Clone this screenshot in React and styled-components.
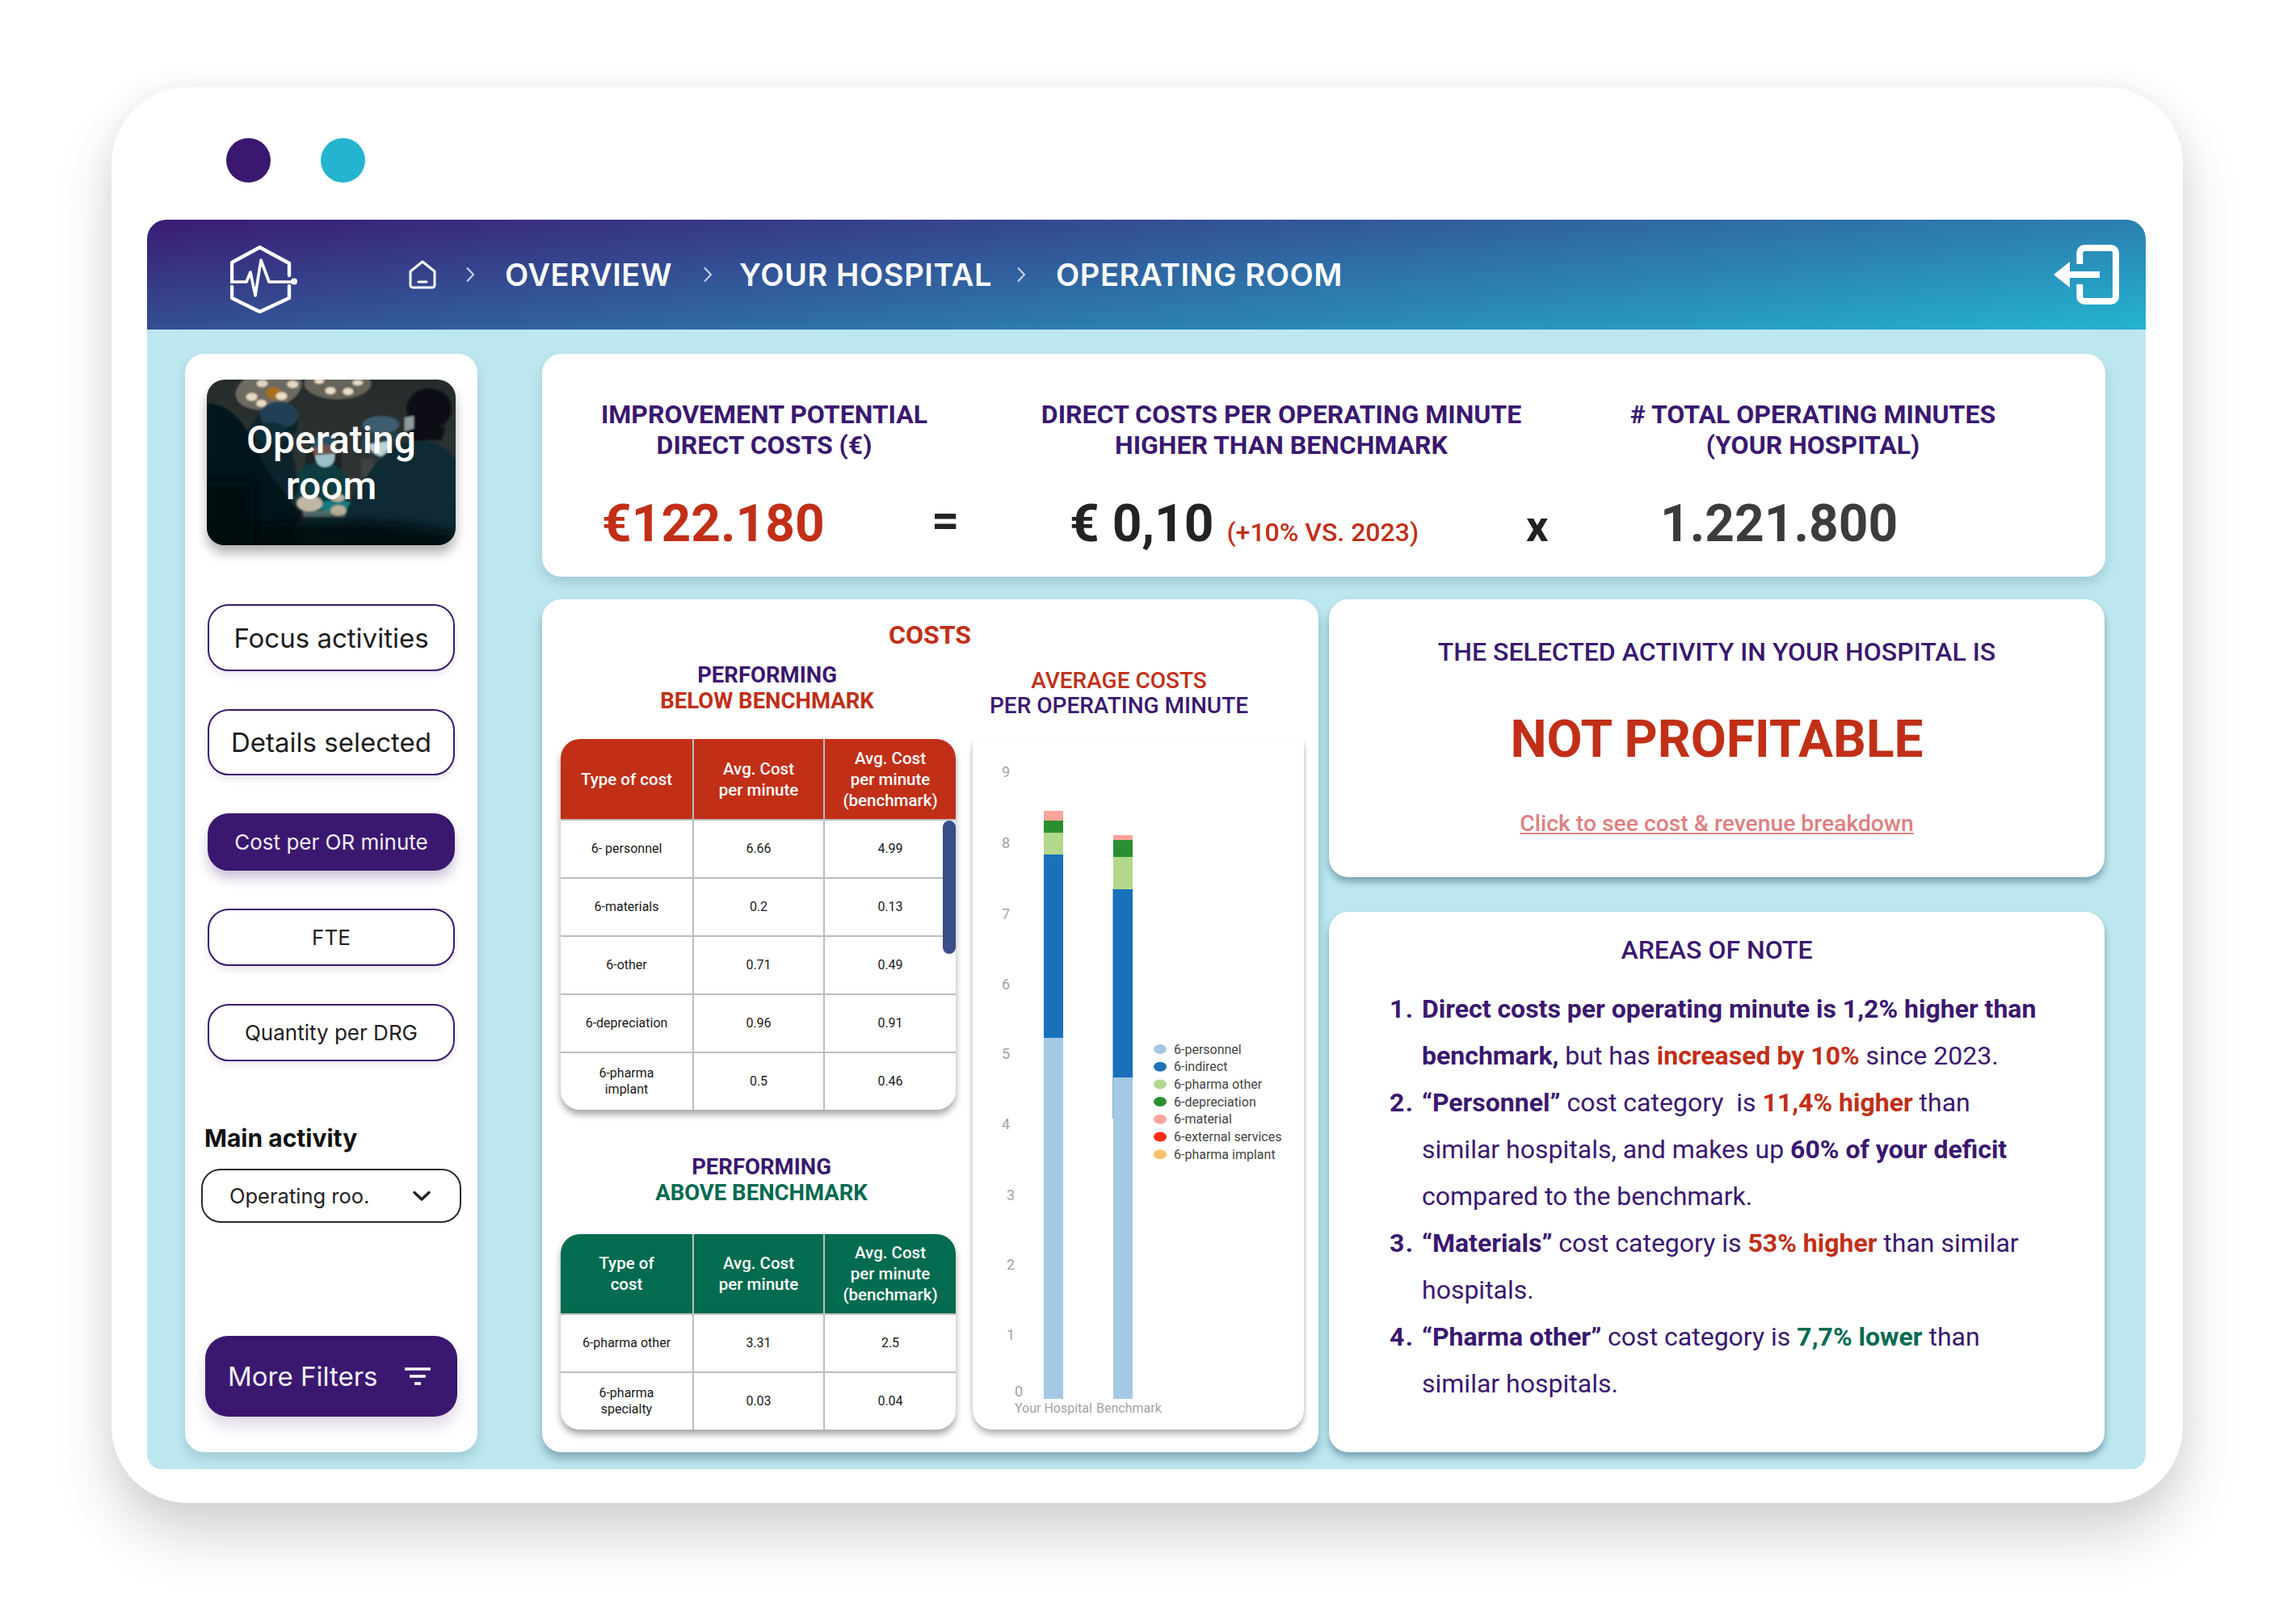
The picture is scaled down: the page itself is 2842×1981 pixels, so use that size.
import React from "react";
import styled, { createGlobalStyle } from "styled-components";

const PURPLE = "#3a186f";
const RED = "#c12f17";
const GREEN = "#036b4f";

const GlobalStyle = createGlobalStyle`
  html, body {
    margin: 0;
    padding: 0;
    background: #fff;
    font-family: "Roboto", "Liberation Sans", sans-serif;
  }
  * { box-sizing: border-box; }
`;

const Page = styled.div`
  width: 2842px;
  height: 1981px;
  padding: 108px 140px 0 138px;
  overflow: hidden;
`;

const Shell = styled.div`
  height: 1753px;
  background: #fff;
  border-radius: 95px;
  padding: 0 46px 42px 44px;
  display: flex;
  flex-direction: column;
  box-shadow: 0 40px 70px rgba(0, 0, 0, 0.17), 0 0 40px rgba(0, 0, 0, 0.05);
`;

const DotRow = styled.div`
  height: 164px;
  flex: none;
  display: flex;
  gap: 62px;
  align-items: flex-start;
  padding: 63px 0 0 98px;
`;

const Dot = styled.span`
  width: 55px;
  height: 55px;
  border-radius: 50%;
  background: ${(p) => p.$color};
`;

const Header = styled.header`
  height: 136px;
  flex: none;
  border-radius: 24px 24px 0 0;
  background: linear-gradient(174deg, #3b1b74 0%, #24b4d0 100%);
  display: flex;
  align-items: center;
  padding: 0 33px 0 103px;
  color: #fff;
`;

const LogoMark = styled.svg`
  flex: none;
  margin-top: 12px;
`;

const Crumbs = styled.nav`
  display: flex;
  align-items: center;
  margin-left: 137px;
  flex: 1;
`;

const Crumb = styled.span`
  font-family: "Inter", "Liberation Sans", sans-serif;
  font-weight: 600;
  font-size: 38px;
  letter-spacing: 0.6px;
  white-space: nowrap;
  width: ${(p) => p.$w}px;
`;

const Chevron = styled.svg`
  width: 12px;
  height: 20px;
  margin: 0 ${(p) => p.$mr}px 0 ${(p) => p.$ml}px;
  flex: none;
`;

const Body = styled.div`
  flex: 1;
  background: #bde7ef;
  border-radius: 0 0 18px 18px;
  padding: 30px 50px 21px 47px;
  display: grid;
  grid-template-columns: 362px 1fr;
  column-gap: 80px;
`;

const Panel = styled.div`
  background: #fff;
  border-radius: 24px;
  box-shadow: 0 8px 14px rgba(20, 60, 90, 0.16);
`;

const Sidebar = styled(Panel)`
  display: flex;
  flex-direction: column;
  align-items: center;
  padding: 32px 0 44px;
`;

const Hero = styled.div`
  position: relative;
  width: 308px;
  height: 205px;
  border-radius: 22px;
  overflow: hidden;
  box-shadow: 0 10px 14px rgba(0, 0, 0, 0.3);
  flex: none;
  margin-bottom: 73px;
`;

const HeroPhoto = styled.svg`
  width: 100%;
  height: 100%;
  display: block;
`;

const HeroTitle = styled.div`
  position: absolute;
  inset: 46px 0 0;
  text-align: center;
  color: #fff;
  font-weight: 500;
  font-size: 48px;
  line-height: 57px;
`;

const NavButton = styled.button`
  width: 306px;
  height: ${(p) => p.$h}px;
  flex: none;
  margin-bottom: 47px;
  border-radius: 26px;
  border: 2px solid ${PURPLE};
  background: ${(p) => (p.$active ? PURPLE : "#fff")};
  color: ${(p) => (p.$active ? "#f1eef8" : "#1d1d1d")};
  font-family: "Inter", "Liberation Sans", sans-serif;
  font-size: ${(p) => p.$fs}px;
  font-weight: 400;
  padding: 0;
  box-shadow: 0 ${(p) => (p.$active ? "10px 14px rgba(58, 24, 111, 0.25)" : "5px 8px rgba(58, 24, 111, 0.1)")};
`;

const FieldLabel = styled.div`
  align-self: flex-start;
  margin: 30px 0 0 24px;
  height: 56px;
  line-height: 36px;
  font-family: "Inter", "Liberation Sans", sans-serif;
  font-weight: 700;
  font-size: 30px;
  color: #111;
`;

const Select = styled.div`
  width: 322px;
  height: 67px;
  flex: none;
  border: 2px solid #2b2b2b;
  border-radius: 24px;
  display: flex;
  align-items: center;
  justify-content: space-between;
  padding: 0 36px 0 33px;
  font-family: "Inter", "Liberation Sans", sans-serif;
  font-size: 25.5px;
  color: #222;
`;

const MoreButton = styled.button`
  width: 312px;
  height: 100px;
  margin-top: auto;
  flex: none;
  border: 0;
  border-radius: 28px;
  background: ${PURPLE};
  color: #f3f0fa;
  font-family: "Inter", "Liberation Sans", sans-serif;
  font-size: 33px;
  display: flex;
  align-items: center;
  justify-content: space-between;
  padding: 0 33px 0 28px;
  box-shadow: 0 12px 18px rgba(58, 24, 111, 0.16);
`;

const Main = styled.main`
  display: flex;
  flex-direction: column;
  gap: 28px;
  min-width: 0;
`;

const KpiCard = styled(Panel)`
  height: 276px;
  flex: none;
  padding-top: 56px;
`;

const KpiHeads = styled.div`
  display: grid;
  grid-template-columns: 550px 730px 586px;
`;

const KpiHead = styled.div`
  text-align: center;
  color: ${PURPLE};
  font-weight: 700;
  font-size: 32px;
  line-height: 38px;
  white-space: nowrap;
`;

const KpiValues = styled.div`
  display: grid;
  grid-template-columns: 408px 171px 565px 166px 1fr;
  padding-left: 74px;
  margin-top: 41px;
  align-items: baseline;
`;

const BigNum = styled.span`
  font-size: 64px;
  line-height: 76px;
  font-weight: 700;
  color: ${(p) => p.$color};
  white-space: nowrap;
`;

const DeltaNote = styled.span`
  font-size: 32px;
  font-weight: 500;
  color: ${RED};
  margin-left: 16px;
`;

const Operator = styled.span`
  font-size: ${(p) => p.$fs}px;
  font-weight: 700;
  color: #222;
  transform: translateY(${(p) => p.$lift}px);
`;

const Columns = styled.div`
  flex: 1;
  display: grid;
  grid-template-columns: 961px 960px;
  column-gap: 13px;
`;

const CostsCard = styled(Panel)`
  padding: 26px 18px 0 23px;
  box-shadow: 0 8px 12px rgba(20, 60, 90, 0.35);
`;

const CostsTitle = styled.h2`
  margin: 0 0 15px;
  padding-right: 6px;
  text-align: center;
  font-size: 32px;
  line-height: 36px;
  font-weight: 700;
  color: ${RED};
`;

const CostsGrid = styled.div`
  display: grid;
  grid-template-columns: 489px 410px;
  column-gap: 21px;
`;

const TableHeading = styled.div`
  text-align: center;
  font-size: 27.5px;
  line-height: 32px;
  font-weight: 700;
  color: ${PURPLE};
  padding-left: ${(p) => p.$shift}px;
  margin: ${(p) => p.$mt}px 0 ${(p) => p.$mb}px;
`;

const Accent = styled.span`
  display: block;
  color: ${(p) => p.$color};
`;

const TableBox = styled.div`
  position: relative;
  border-radius: 24px;
  overflow: hidden;
  box-shadow: 0 6px 8px rgba(0, 0, 0, 0.35);
`;

const Table = styled.table`
  width: 100%;
  table-layout: fixed;
  border-collapse: separate;
  border-spacing: 0;
  background: #fff;

  th {
    background: ${(p) => p.$color};
    color: #fff;
    height: ${(p) => p.$headH}px;
    font-size: 20.5px;
    line-height: 26px;
    font-weight: 500;
    padding: 0;
    border-right: 2px solid #bdbdbd;
    border-bottom: 2px solid #bdbdbd;
  }
  th:first-child { width: 165px; }
  td {
    height: 72px;
    font-size: 16px;
    line-height: 20px;
    color: #1a1a1a;
    text-align: center;
    padding: 0;
    border-right: 2px solid #bdbdbd;
    border-bottom: 2px solid #bdbdbd;
  }
  th:last-child, td:last-child { border-right: 0; }
  tr:last-child td { border-bottom: 0; height: 70px; }
`;

const ScrollThumb = styled.div`
  position: absolute;
  top: 101px;
  right: 0;
  width: 16px;
  height: 165px;
  border-radius: 8px;
  background: #3a4e87;
`;

const ChartHeading = styled.div`
  text-align: center;
  font-size: 28px;
  line-height: 31px;
  font-weight: 500;
  color: ${PURPLE};
  margin: 8px 0 26px;
  padding-right: 48px;
  white-space: nowrap;
`;

const ChartBox = styled.div`
  height: 855px;
  background: #fff;
  border-radius: 0 0 24px 24px;
  box-shadow: 0 7px 9px -2px rgba(0, 0, 0, 0.32), 4px 0 6px -4px rgba(0, 0, 0, 0.15), -4px 0 6px -4px rgba(0, 0, 0, 0.15);
`;

const ChartSvg = styled.svg`
  display: block;
  width: 410px;
  height: 855px;
`;

const SideStack = styled.div`
  display: flex;
  flex-direction: column;
  gap: 43px;
`;

const VerdictCard = styled(Panel)`
  height: 344px;
  flex: none;
  text-align: center;
  padding-top: 47px;
  box-shadow: 0 6px 8px rgba(20, 60, 90, 0.4);
`;

const VerdictLead = styled.div`
  font-size: 32px;
  line-height: 36px;
  font-weight: 500;
  color: ${PURPLE};
`;

const VerdictBig = styled.div`
  margin-top: 52px;
  font-size: 64px;
  line-height: 78px;
  font-weight: 700;
  color: ${RED};
`;

const VerdictLink = styled.a`
  display: block;
  margin-top: 47px;
  font-size: 28.3px;
  line-height: 36px;
  font-weight: 500;
  color: #df7f82;
  text-decoration: underline;
`;

const NotesCard = styled(Panel)`
  flex: 1;
  padding: 29px 77px 0 115px;
  box-shadow: 0 6px 8px rgba(20, 60, 90, 0.4);
  color: ${PURPLE};
`;

const NotesTitle = styled.h2`
  margin: 0 0 0 -38px;
  text-align: center;
  font-size: 32px;
  line-height: 36px;
  font-weight: 500;
  padding-bottom: 26px;
`;

const NotesList = styled.ol`
  margin: 0;
  padding: 0;
  font-size: 32px;
  line-height: 58px;

  li::marker { font-weight: 700; letter-spacing: 1.5px; }
`;

const Mark = styled.b`
  font-weight: 700;
  color: ${(p) => p.$color || PURPLE};
`;

const rowsBelow = [
  ["6- personnel", "6.66", "4.99"],
  ["6-materials", "0.2", "0.13"],
  ["6-other", "0.71", "0.49"],
  ["6-depreciation", "0.96", "0.91"],
  ["6-pharma\nimplant", "0.5", "0.46"],
];

const rowsAbove = [
  ["6-pharma other", "3.31", "2.5"],
  ["6-pharma\nspecialty", "0.03", "0.04"],
];

const seriesColors = {
  personnel: "#a3c9e5",
  indirect: "#1a71ba",
  pharmaOther: "#b2d88b",
  depreciation: "#2c8f2f",
  material: "#fda49b",
};

// tops of each stacked block, already in chart pixels
const bars = [
  {
    x: 88,
    blocks: [
      ["material", 89, 12],
      ["depreciation", 101, 15],
      ["pharmaOther", 116, 27],
      ["indirect", 143, 227],
      ["personnel", 370, 447],
    ],
  },
  {
    x: 174,
    blocks: [
      ["material", 119, 6],
      ["depreciation", 125, 21],
      ["pharmaOther", 146, 40],
      ["indirect", 186, 233],
      ["personnel", 419, 398],
    ],
  },
];

const yTicks = [
  ["9", 36, 47],
  ["8", 36, 135],
  ["7", 36, 223],
  ["6", 36, 310],
  ["5", 36, 396],
  ["4", 36, 483],
  ["3", 42, 571],
  ["2", 42, 657],
  ["1", 42, 744],
  ["0", 52, 814],
];

const legend = [
  ["6-personnel", "#a3c9e5"],
  ["6-indirect", "#1a71ba"],
  ["6-pharma other", "#b2d88b"],
  ["6-depreciation", "#2c8f2f"],
  ["6-material", "#fda49b"],
  ["6-external services", "#ff2a14"],
  ["6-pharma implant", "#ffc06c"],
];

function Multiline({ text }) {
  return text.split("\n").map((t, i) => (
    <React.Fragment key={i}>
      {i > 0 && <br />}
      {t}
    </React.Fragment>
  ));
}

function CostTable({ color, headH, heads, rows, thumb }) {
  return (
    <TableBox>
      <Table $color={color} $headH={headH}>
        <thead>
          <tr>
            {heads.map((h) => (
              <th key={h}>
                <Multiline text={h} />
              </th>
            ))}
          </tr>
        </thead>
        <tbody>
          {rows.map((r) => (
            <tr key={r[0]}>
              {r.map((c, i) => (
                <td key={i}>
                  <Multiline text={c} />
                </td>
              ))}
            </tr>
          ))}
        </tbody>
      </Table>
      {thumb && <ScrollThumb />}
    </TableBox>
  );
}

function Logo() {
  return (
    <LogoMark width="84" height="84" viewBox="0 0 84 84" fill="none" stroke="#fff" strokeWidth="4.4" strokeLinejoin="round" strokeLinecap="round">
      <path d="M2 45V21L36.5 2.2 73 22v15" />
      <path d="M2 51v14l34.5 17L73 65V50" />
      <path d="M2 45h18l5-12 6 29 7-44 10 27h32" strokeWidth="3.6" />
      <circle cx="79" cy="44.5" r="4" fill="#fff" stroke="none" />
    </LogoMark>
  );
}

function HomeIcon() {
  return (
    <svg width="34" height="36" viewBox="0 0 34 36" fill="none" stroke="#fff" strokeWidth="3" strokeLinejoin="round" strokeLinecap="round">
      <path d="M2 14 17 2l15 12v17a3 3 0 0 1-3 3H5a3 3 0 0 1-3-3z" />
      <path d="M12 27h10" />
    </svg>
  );
}

function Arrow({ ml, mr }) {
  return (
    <Chevron $ml={ml} $mr={mr} viewBox="0 0 12 20" fill="none" stroke="#c9d6e8" strokeWidth="2">
      <path d="M2 1.5 10 10l-8 8.5" />
    </Chevron>
  );
}

function ExitIcon() {
  return (
    <svg width="81" height="74" viewBox="0 0 81 74" fill="none">
      <path d="M32.3 24V10a6 6 0 0 1 6-6H71a6 6 0 0 1 6 6v54a6 6 0 0 1-6 6H38.3a6 6 0 0 1-6-6V49" stroke="#fff" strokeWidth="8" />
      <path d="M0 37 20 21v12h37v8H20v12z" fill="#fff" />
    </svg>
  );
}

function SurgeryPhoto() {
  return (
    <HeroPhoto viewBox="0 0 310 210" preserveAspectRatio="none">
      <defs>
        <linearGradient id="orWall" x1="0" y1="0" x2="0" y2="1">
          <stop offset="0" stopColor="#262c2c" />
          <stop offset="0.6" stopColor="#2f3535" />
          <stop offset="1" stopColor="#141c1e" />
        </linearGradient>
        <filter id="soft" x="-20%" y="-20%" width="140%" height="140%">
          <feGaussianBlur stdDeviation="1" />
        </filter>
        <filter id="softer" x="-30%" y="-30%" width="160%" height="160%">
          <feGaussianBlur stdDeviation="6" />
        </filter>
      </defs>
      <rect width="310" height="210" fill="url(#orWall)" />
      <g filter="url(#soft)">
        <ellipse cx="77" cy="12" rx="42" ry="25" fill="#6d6a62" transform="rotate(-14 77 12)" />
        <ellipse cx="83" cy="17" rx="9" ry="8" fill="#a86f1c" />
        <ellipse cx="56" cy="22" rx="7" ry="5" fill="#e6d9c4" />
        <ellipse cx="68" cy="30" rx="6.5" ry="4.5" fill="#ead9c0" />
        <ellipse cx="93" cy="21" rx="7" ry="5" fill="#eadbc4" />
        <ellipse cx="107" cy="6" rx="7" ry="4.5" fill="#e6d9c4" />
        <ellipse cx="69" cy="5" rx="7" ry="4.5" fill="#e0d2bb" />
        <ellipse cx="163" cy="5" rx="42" ry="20" fill="#666359" />
        <ellipse cx="140" cy="2" rx="6" ry="3.5" fill="#ead9c0" />
        <ellipse cx="154" cy="14" rx="6.5" ry="4.5" fill="#eadbc4" />
        <ellipse cx="176" cy="15" rx="6.5" ry="4.5" fill="#e9dcc6" />
        <ellipse cx="188" cy="4" rx="6.5" ry="3.5" fill="#e6d9c4" />
        <rect x="123" y="92" width="44" height="26" fill="#1b2124" />
        <rect x="192" y="100" width="16" height="24" fill="#3c4242" />
        <ellipse cx="142" cy="140" rx="36" ry="36" fill="#0b3d41" />
        <ellipse cx="147" cy="88" rx="15" ry="16" fill="#6e5548" />
        <path d="M132 86c0-12 8-16 15-16s15 5 15 15l-15-3z" fill="#284f66" />
        <path d="M135 96l24-2c1 8-1 16-12 17-8 0-12-7-12-15z" fill="#9cbfc8" />
        <path d="M120 175 h80 l10 35 H110z" fill="#10323a" />
        <ellipse cx="160" cy="160" rx="24" ry="7" fill="#16797f" />
        <rect x="120" y="166" width="70" height="8" fill="#7f8c88" opacity="0.6" />
        <ellipse cx="128" cy="157" rx="16" ry="10" fill="#bfb6a3" />
        <ellipse cx="163" cy="150" rx="9" ry="5" fill="#b8b19e" />
        <path d="M45 75C60 52 70 30 90 30c16 0 24 12 23 30l-8 20 10 60-40 50z" fill="#07222c" />
        <ellipse cx="90" cy="45" rx="24" ry="17" fill="#243f54" />
        <ellipse cx="80" cy="68" rx="20" ry="14" fill="#0b2f3b" />
        <path d="M190 90c4-20 16-38 30-40 10 0 18 8 16 22l-14 30z" fill="#263f49" />
        <ellipse cx="217" cy="57" rx="23" ry="11" fill="#3c5c70" />
        <path d="M202 82l24-4c2 10-4 19-10 19-6-1-14-8-14-15z" fill="#bcd2d2" />
        <path d="M172 170c14-30 40-76 74-90 26-8 52 2 64 22v108H175z" fill="#0a2a35" />
        <ellipse cx="277" cy="37" rx="28" ry="26" fill="#090c12" />
        <path d="M247 52c10 6 44 10 50 8l-4 16-36 2-10-10z" fill="#090c12" />
        <path d="M246 48l12-2v16l-12 4z" fill="#8f9a9c" />
        <ellipse cx="164" cy="166" rx="10" ry="7" fill="#b7af9a" />
        <path d="M0 30c26 0 50 25 62 60 14 34 34 50 44 66l12 14-20 40H0z" fill="#03131b" />
      </g>
      <ellipse cx="155" cy="215" rx="180" ry="36" fill="#01070b" filter="url(#softer)" opacity="0.9" />
      <rect x="-10" y="130" width="70" height="90" fill="#01090e" filter="url(#softer)" opacity="0.8" />
    </HeroPhoto>
  );
}

function CostChart() {
  return (
    <ChartSvg viewBox="0 0 410 855">
      {yTicks.map(([t, x, y]) => (
        <text key={t} x={x} y={y} fontFamily="Roboto, sans-serif" fontSize="18" fill="#a3a3a3">
          {t}
        </text>
      ))}
      {bars.map((b) =>
        b.blocks.map(([k, top, h]) => (
          <rect key={b.x + k} x={b.x} y={top} width="24" height={h} fill={seriesColors[k]} />
        ))
      )}
      <rect x="173" y="186" width="1" height="284" fill="#7fb0da" />
      <text x="52" y="834" fontFamily="Roboto, sans-serif" fontSize="16" fill="#a3a3a3">
        Your Hospital
      </text>
      <text x="153" y="834" fontFamily="Roboto, sans-serif" fontSize="16" fill="#a3a3a3">
        Benchmark
      </text>
      {legend.map(([label, color], i) => (
        <g key={label}>
          <ellipse cx="232" cy={384 + i * 21.7} rx="8" ry="6" fill={color} />
          <text x="249" y={389.5 + i * 21.7} fontFamily="Roboto, sans-serif" fontSize="16" fill="#444">
            {label}
          </text>
        </g>
      ))}
    </ChartSvg>
  );
}

export default function App() {
  return (
    <Page>
      <GlobalStyle />
      <Shell>
        <DotRow>
          <Dot $color="#3a186f" />
          <Dot $color="#24b4d0" />
        </DotRow>
        <Header>
          <Logo />
          <Crumbs>
            <HomeIcon />
            <Arrow ml={36} mr={37} />
            <Crumb $w={208}>OVERVIEW</Crumb>
            <Arrow ml={37} mr={33} />
            <Crumb $w={310}>YOUR HOSPITAL</Crumb>
            <Arrow ml={33} mr={37} />
            <Crumb $w={353}>OPERATING ROOM</Crumb>
          </Crumbs>
          <ExitIcon />
        </Header>
        <Body>
          <Sidebar>
            <Hero>
              <SurgeryPhoto />
              <HeroTitle>
                Operating
                <br />
                room
              </HeroTitle>
            </Hero>
            <NavButton $h={83} $fs={33}>Focus activities</NavButton>
            <NavButton $h={82} $fs={33}>Details selected</NavButton>
            <NavButton $h={71} $fs={26} $active>Cost per OR minute</NavButton>
            <NavButton $h={71} $fs={26}>FTE</NavButton>
            <NavButton $h={71} $fs={26}>Quantity per DRG</NavButton>
            <FieldLabel>Main activity</FieldLabel>
            <Select>
              <span>Operating roo.</span>
              <svg width="22" height="14" viewBox="0 0 22 14" fill="none" stroke="#222" strokeWidth="3.4" strokeLinecap="round" strokeLinejoin="round">
                <path d="M2 2.5 11 11l9-8.5" />
              </svg>
            </Select>
            <MoreButton>
              <span>More Filters</span>
              <svg width="32" height="24" viewBox="0 0 32 24" fill="none" stroke="#fff" strokeWidth="3.4">
                <path d="M0 3h32M6 12h20M12 21h8" />
              </svg>
            </MoreButton>
          </Sidebar>
          <Main>
            <KpiCard>
              <KpiHeads>
                <KpiHead>
                  IMPROVEMENT POTENTIAL
                  <br />
                  DIRECT COSTS (€)
                </KpiHead>
                <KpiHead>
                  DIRECT COSTS PER OPERATING MINUTE
                  <br />
                  HIGHER THAN BENCHMARK
                </KpiHead>
                <KpiHead>
                  # TOTAL OPERATING MINUTES
                  <br />
                  (YOUR HOSPITAL)
                </KpiHead>
              </KpiHeads>
              <KpiValues>
                <BigNum $color={RED}>€122.180</BigNum>
                <Operator $fs={60} $lift={-6}>=</Operator>
                <span>
                  <BigNum $color="#232323">€ 0,10</BigNum>
                  <DeltaNote>(+10% VS. 2023)</DeltaNote>
                </span>
                <Operator $fs={54} $lift={0}>x</Operator>
                <BigNum $color="#3c3c3c">1.221.800</BigNum>
              </KpiValues>
            </KpiCard>
            <Columns>
              <CostsCard>
                <CostsTitle>COSTS</CostsTitle>
                <CostsGrid>
                  <div>
                    <TableHeading $shift={22} $mt={1} $mb={31}>
                      PERFORMING
                      <Accent $color={RED}>BELOW BENCHMARK</Accent>
                    </TableHeading>
                    <CostTable
                      color={RED}
                      headH={101}
                      heads={["Type of cost", "Avg. Cost\nper minute", "Avg. Cost\nper minute\n(benchmark)"]}
                      rows={rowsBelow}
                      thumb
                    />
                    <TableHeading $shift={8} $mt={55} $mb={35}>
                      PERFORMING
                      <Accent $color={GREEN}>ABOVE BENCHMARK</Accent>
                    </TableHeading>
                    <CostTable
                      color={GREEN}
                      headH={100}
                      heads={["Type of\ncost", "Avg. Cost\nper minute", "Avg. Cost\nper minute\n(benchmark)"]}
                      rows={rowsAbove}
                    />
                  </div>
                  <div>
                    <ChartHeading>
                      <Accent $color={RED}>AVERAGE COSTS</Accent>
                      PER OPERATING MINUTE
                    </ChartHeading>
                    <ChartBox>
                      <CostChart />
                    </ChartBox>
                  </div>
                </CostsGrid>
              </CostsCard>
              <SideStack>
                <VerdictCard>
                  <VerdictLead>THE SELECTED ACTIVITY IN YOUR HOSPITAL IS</VerdictLead>
                  <VerdictBig>NOT PROFITABLE</VerdictBig>
                  <VerdictLink>Click to see cost &amp; revenue breakdown</VerdictLink>
                </VerdictCard>
                <NotesCard>
                  <NotesTitle>AREAS OF NOTE</NotesTitle>
                  <NotesList>
                    <li>
                      <Mark>Direct costs per operating minute is 1,2% higher than benchmark,</Mark> but has{" "}
                      <Mark $color={RED}>increased by 10%</Mark> since 2023.
                    </li>
                    <li>
                      <Mark>“Personnel”</Mark> cost category&nbsp; is <Mark $color={RED}>11,4% higher</Mark> than similar hospitals, and makes up{" "}
                      <Mark>60% of your deficit</Mark> compared to the benchmark.
                    </li>
                    <li>
                      <Mark>“Materials”</Mark> cost category is <Mark $color={RED}>53% higher</Mark> than similar hospitals.
                    </li>
                    <li>
                      <Mark>“Pharma other”</Mark> cost category is <Mark $color={GREEN}>7,7% lower</Mark> than similar hospitals.
                    </li>
                  </NotesList>
                </NotesCard>
              </SideStack>
            </Columns>
          </Main>
        </Body>
      </Shell>
    </Page>
  );
}
